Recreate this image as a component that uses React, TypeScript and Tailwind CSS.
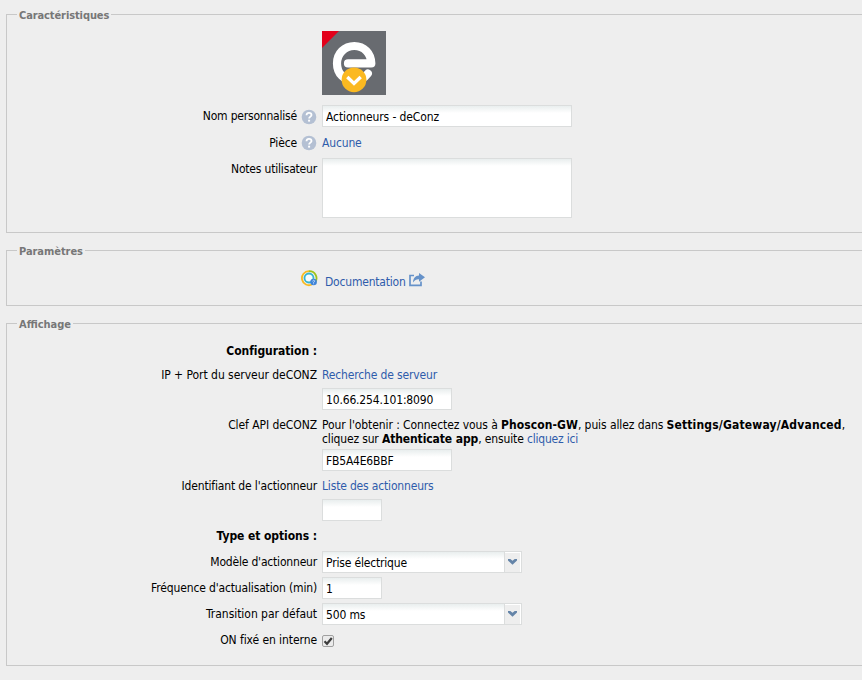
import type { ReactNode } from "react";

const field =
  "block h-[22px] appearance-none rounded-none border border-[#dbdddd] bg-white bg-linear-to-b from-[#e9eeee] to-white to-35% pl-[3px] pr-0 pt-[1px] pb-0 outline-none leading-[19px]";
const link = "text-[#2e5cab]";

function Section({ title, className, titleClass, children }: { title: ReactNode; className: string; titleClass: string; children: ReactNode }) {
  return (
    <fieldset className={`ml-[6px] w-[900px] border border-[#c8c8c8] ${className}`}>
      <legend className={`ml-[10px] h-[15px] px-[2px] pt-[2px] text-[11px] font-bold leading-[14px] text-[#777777] ${titleClass}`}>{title}</legend>
      {children}
    </fieldset>
  );
}

function Row({ label, className, children }: { label?: ReactNode; className: string; children?: ReactNode }) {
  return (
    <div className={`flex items-start gap-[5px] ${className}`}>
      <div className="flex w-[310px] shrink-0 justify-end whitespace-nowrap tracking-[-0.15px]">{label}</div>
      <div className="whitespace-nowrap">{children}</div>
    </div>
  );
}

function Help() {
  return (
    <svg className="ml-[4px] mt-[4px] block" width="16" height="16" viewBox="0 0 16 16">
      <circle cx="8" cy="8" r="7.3" fill="#b4c0d3" />
      <path d="M5.5 6.2C5.6 4.7 6.6 3.9 8 3.9C9.5 3.9 10.5 4.7 10.5 6C10.5 7.6 8.1 7.7 8.1 9.6" fill="none" stroke="#fff" strokeWidth="1.8" />
      <rect x="7.1" y="10.7" width="2" height="1.9" fill="#fff" />
    </svg>
  );
}

function DeviceIcon() {
  return (
    <svg className="block" width="64" height="64" viewBox="0 0 64 64">
      <rect width="64" height="64" fill="#686b70" />
      <path d="M0 0H17L0 17Z" fill="#e2001a" />
      <path d="M26 32.4H49.3C49 22 42 15 32.3 15C22.5 15 15 22.5 15 32.4C15 42.5 22.5 50 32 50C38 50 42.5 47 45.8 42.6" fill="none" stroke="#fff" strokeWidth="8.2" strokeLinecap="round" strokeLinejoin="round" />
      <circle cx="32" cy="48.8" r="12.4" fill="#fbb921" />
      <path d="M25.3 46L32 52.4L38.7 46" fill="none" stroke="#fff" strokeWidth="3.4" />
    </svg>
  );
}

function DocIcon() {
  return (
    <svg className="mt-[1px] block" width="17" height="17" viewBox="0 0 17 17">
      <path d="M14.2 12.2A7 7 0 0 0 8 1.2" fill="none" stroke="#9fc31c" strokeWidth="1.8" />
      <path d="M8 1.2A7 7 0 1 0 11 14.5" fill="none" stroke="#f6ba23" strokeWidth="1.8" />
      <circle cx="8" cy="8" r="4.5" fill="#f5fbff" stroke="#35b4d0" strokeWidth="1.8" />
      <circle cx="12.6" cy="12" r="3.3" fill="#3f83d8" />
      <path d="M11.5 11.2Q12.6 9.5 13.6 10.8Q13.8 11.6 12.6 12.2V12.8M12.6 13.4V14.2" fill="none" stroke="#c9e0f8" strokeWidth="1" />
    </svg>
  );
}

function ShareIcon() {
  return (
    <svg className="ml-[3px] block" width="17" height="14" viewBox="0 0 17 14">
      <path d="M5 2.5H1V12.3H12V8.5" fill="none" stroke="#6692c9" strokeWidth="1.7" />
      <path d="M10 0L16 4.3L10 8.7V6.4C7.5 6.2 6 7 4 9.4C4.2 5.5 6.3 2.5 10 2.4Z" fill="#6692c9" />
    </svg>
  );
}

function Select({ value, className }: { value: string; className: string }) {
  return (
    <div className="flex h-[22px] w-[200px]">
      <input className={`w-[182px] ${field} border-r-0 ${className}`} defaultValue={value} />
      <button className="flex h-[22px] w-[18px] items-center justify-center border border-[#dbdddd] bg-[#eeeeee] shadow-[inset_-1px_1px_0_#fff]">
        <svg className="-mt-[1px] -ml-[1px]" width="9" height="6" viewBox="0 0 9 6">
          <path d="M0 0H2.3L4.5 1.7L6.7 0H9V1.5L4.5 5.8L0 1.5Z" fill="#6484a8" />
        </svg>
      </button>
    </div>
  );
}

export default function App() {
  return (
    <div className="h-[680px] w-[862px] overflow-hidden bg-[#eeeeee] pt-[7px] font-['DejaVu_Sans_Condensed','DejaVu_Sans',sans-serif] text-[12px] leading-[22px] text-black [font-stretch:condensed]">
      <Section title="Caractéristiques" titleClass="tracking-[-0.1px]" className="h-[226px]">
        <Row className="h-[83px] pt-[9px]">
          <DeviceIcon />
        </Row>
        <Row className="h-[26px]" label={<><span className="tracking-[-0.2px]">Nom personnalisé</span><Help /></>}>
          <input className={`w-[250px] tracking-[-0.1px] ${field}`} defaultValue="Actionneurs - deConz" />
        </Row>
        <Row className="h-[26px]" label={<><span className="pt-[1px]">Pièce</span><Help /></>}>
          <a className={`block pt-[1px] tracking-[-0.15px] ${link}`}>Aucune</a>
        </Row>
        <Row className="h-[62px]" label={<span className="pt-[1px] tracking-[-0.18px]">Notes utilisateur</span>}>
          <textarea className={`mt-[1px] h-[60px]! w-[250px] resize-none to-12%! ${field}`} />
        </Row>
      </Section>

      <Section title="Paramètres" titleClass="tracking-[-0.05px]" className="mt-[10px] h-[63px]">
        <div className="flex items-start pl-[294px] pt-[11px]">
          <DocIcon />
          <a className={`ml-[7px] mt-[2px] tracking-[-0.2px] ${link}`}>Documentation</a>
          <div className="mt-[4px]">
            <ShareIcon />
          </div>
        </div>
      </Section>

      <Section title="Affichage" titleClass="tracking-[0px]" className="mt-[10px] h-[350px]">
        <Row className="h-[33px] pt-[9px]" label={<b className="tracking-[-0.05px]">Configuration :</b>} />
        <Row className="h-[50px]" label={<span className="tracking-[-0.04px]">IP + Port du serveur deCONZ</span>}>
          <a className={`block h-[24px] tracking-[-0.15px] ${link}`}>Recherche de serveur</a>
          <input className={`w-[130px] tracking-[-0.16px] ${field}`} defaultValue="10.66.254.101:8090" />
        </Row>
        <Row className="h-[61px]" label={<span className="tracking-[-0.07px]">Clef API deCONZ</span>}>
          <div className="h-[35px] pt-[4px] leading-[14px]">
            <span className="tracking-[-0.08px]">Pour l'obtenir : Connectez vous à </span><b className="tracking-[0.07px]">Phoscon-GW</b><span className="tracking-[-0.1px]">, puis allez dans </span><b className="tracking-[0.17px]">Settings/Gateway/Advanced</b>,
            <br />
            <span className="tracking-[-0.15px]">cliquez sur </span><b className="tracking-[-0.1px]">Athenticate app</b><span className="tracking-[-0.13px]">, ensuite </span><a className={`tracking-[-0.2px] ${link}`}>cliquez ici</a>
          </div>
          <input className={`w-[130px] tracking-[-0.2px] ${field}`} defaultValue="FB5A4E6BBF" />
        </Row>
        <Row className="h-[50px]" label="Identifiant de l'actionneur">
          <a className={`block h-[24px] tracking-[-0.17px] ${link}`}>Liste des actionneurs</a>
          <input className={`w-[60px] ${field}`} />
        </Row>
        <Row className="h-[26px]" label={<b className="tracking-[-0.07px]">Type et options :</b>} />
        <Row className="h-[26px]" label={<span className="tracking-[-0.19px]">Modèle d'actionneur</span>}>
          <Select value="Prise électrique" className="tracking-[-0.17px]" />
        </Row>
        <Row className="h-[26px]" label={<span>Fréquence d'actualisation (min)</span>}>
          <input className={`w-[60px] ${field}`} defaultValue="1" />
        </Row>
        <Row className="h-[26px]" label={<span className="tracking-[-0.04px]">Transition par défaut</span>}>
          <Select value="500 ms" className="tracking-[-0.15px]" />
        </Row>
        <Row className="h-[26px]" label={<span className="tracking-[-0.08px]">ON fixé en interne</span>}>
          <svg className="mt-[6px] block" width="12" height="13" viewBox="0 0 12 13">
            <rect x="0.5" y="0.5" width="11" height="11" rx="1.5" fill="#ebebeb" stroke="#a0a0a0" />
            <path d="M2.5 6.3L5 8.8L9.8 3" fill="none" stroke="#3c3c3c" strokeWidth="2.2" />
          </svg>
        </Row>
      </Section>
    </div>
  );
}
